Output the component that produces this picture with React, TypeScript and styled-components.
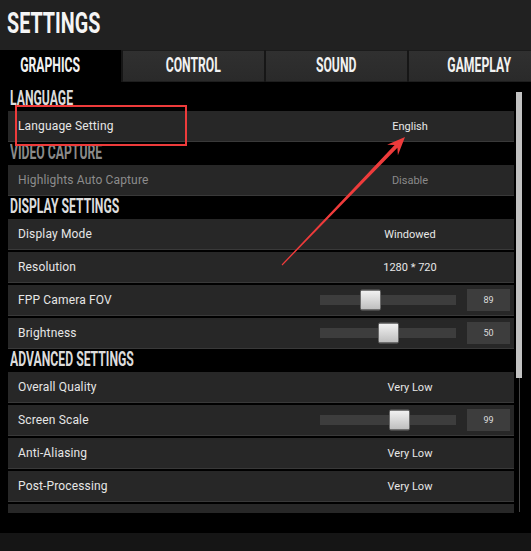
import styled, { createGlobalStyle } from "styled-components";

const GlobalStyle = createGlobalStyle`
  html, body {
    margin: 0;
    padding: 0;
    background: #000;
  }
  body {
    font-family: Roboto, "Liberation Sans", sans-serif;
  }
`;

const Screen = styled.div`
  position: relative;
  width: 531px;
  height: 551px;
  overflow: hidden;
  display: flex;
  flex-direction: column;
  background: #000;
`;

// game-style narrow caps, squeezed from Roboto bold
const Condensed = styled.span<{ $scale?: number; $origin?: string }>`
  display: inline-block;
  font-family: Roboto, "Liberation Sans", sans-serif;
  font-weight: 700;
  white-space: nowrap;
  transform: scaleX(${(p) => p.$scale ?? 0.61});
  transform-origin: ${(p) => p.$origin ?? "left"} center;
`;

const TitleBar = styled.header`
  height: 50px;
  flex-shrink: 0;
  box-sizing: border-box;
  padding: 9px 0 0 7px;
  background: #212121;
`;

const Title = styled(Condensed)`
  font-size: 29px;
  line-height: 29px;
  color: #f5f5f5;
`;

const TabBar = styled.nav`
  height: 32px;
  flex-shrink: 0;
  display: flex;
  gap: 2px;
  margin-left: -20px;
  background: #161616;
`;

const Tab = styled.div<{ $active?: boolean }>`
  width: 141px;
  flex-shrink: 0;
  box-sizing: border-box;
  display: flex;
  align-items: center;
  justify-content: center;
  padding-bottom: 2px;
  background: ${(p) =>
    p.$active ? "#000" : "linear-gradient(#303030, #2a2a2a)"};
  border-top: 1px solid ${(p) => (p.$active ? "#000" : "#1b1b1b")};
  border-bottom: 1px solid ${(p) => (p.$active ? "#000" : "#1e1e1e")};
`;

const TabLabel = styled(Condensed)`
  font-size: 20px;
  line-height: 20px;
  color: #f2f2f2;
`;

const Body = styled.main`
  flex: 1;
  min-height: 0;
  display: flex;
  padding: 0 0 20px 8px;
`;

const List = styled.div`
  width: 506px;
  flex-shrink: 0;
  box-sizing: border-box;
  padding-top: 8px;
  overflow: hidden;
  display: flex;
  flex-direction: column;
`;

const Scroll = styled.div`
  width: 6px;
  margin: 10px 0 1px 2px;
  display: flex;
  flex-direction: column;
  align-items: center;
`;

const Thumb = styled.div`
  width: 6px;
  height: 286px;
  background: #c2c2c2;
`;

const Rail = styled.div`
  flex: 1;
  width: 1px;
  background: #464646;
`;

const SectionTitle = styled.div<{ $dim?: boolean }>`
  height: 21px;
  flex-shrink: 0;
  padding-left: 2px;
  line-height: 17px;
  color: ${(p) => (p.$dim ? "#8a8a8a" : "#dcdcdc")};
`;

const SectionText = styled(Condensed)`
  font-size: 20px;
`;

const Row = styled.div`
  flex-shrink: 0;
  height: 30px;
  margin-bottom: 2px;
  display: grid;
  grid-template-columns: 312px 1fr;
  align-items: center;
  background: #272727;
  border-bottom: 1px solid #393939;
`;

const Label = styled.span<{ $dim?: boolean }>`
  padding-left: 10px;
  font-size: 12px;
  letter-spacing: 0.15px;
  color: ${(p) => (p.$dim ? "#8c8c8c" : "#e6e6e6")};
`;

const Value = styled.span<{ $dim?: boolean }>`
  width: 180px;
  text-align: center;
  font-size: 11px;
  color: ${(p) => (p.$dim ? "#8a8a8a" : "#e8e8e8")};
`;

const Slider = styled.div`
  display: flex;
  align-items: center;
  gap: 11px;
`;

const Track = styled.div`
  position: relative;
  width: 136px;
  height: 10px;
  background: #3d3d3d;
`;

const Knob = styled.div`
  position: absolute;
  top: 50%;
  width: 21px;
  height: 21px;
  box-sizing: border-box;
  transform: translateY(-50%);
  border: 1px solid #6a6a6a;
  border-radius: 2px;
  background: linear-gradient(#f2f2f2, #bdbdbd);
`;

const NumBox = styled.div`
  width: 43px;
  height: 22px;
  display: flex;
  align-items: center;
  justify-content: center;
  background: #3d3d3d;
  font-size: 9px;
  color: #dedede;
`;

const BottomBar = styled.footer`
  height: 18px;
  flex-shrink: 0;
  background: #151515;
`;

const Markup = styled.svg`
  position: absolute;
  top: 0;
  left: 0;
  pointer-events: none;
`;

type Item =
  | { kind: "section"; title: string; dim?: boolean }
  | { kind: "value"; label: string; value: string; dim?: boolean }
  | { kind: "slider"; label: string; value: number; knob: number }
  | { kind: "more" };

const items: Item[] = [
  { kind: "section", title: "LANGUAGE" },
  { kind: "value", label: "Language Setting", value: "English" },
  { kind: "section", title: "VIDEO CAPTURE", dim: true },
  { kind: "value", label: "Highlights Auto Capture", value: "Disable", dim: true },
  { kind: "section", title: "DISPLAY SETTINGS" },
  { kind: "value", label: "Display Mode", value: "Windowed" },
  { kind: "value", label: "Resolution", value: "1280 * 720" },
  { kind: "slider", label: "FPP Camera FOV", value: 89, knob: 40 },
  { kind: "slider", label: "Brightness", value: 50, knob: 58 },
  { kind: "section", title: "ADVANCED SETTINGS" },
  { kind: "value", label: "Overall Quality", value: "Very Low" },
  { kind: "slider", label: "Screen Scale", value: 99, knob: 69 },
  { kind: "value", label: "Anti-Aliasing", value: "Very Low" },
  { kind: "value", label: "Post-Processing", value: "Very Low" },
  { kind: "more" },
];

const tabs = ["GRAPHICS", "CONTROL", "SOUND", "GAMEPLAY"];

export default function App() {
  return (
    <>
      <GlobalStyle />
      <Screen>
        <TitleBar>
          <Title $scale={0.68}>SETTINGS</Title>
        </TitleBar>
        <TabBar>
          {tabs.map((t, i) => (
            <Tab key={t} $active={i === 0}>
              <TabLabel $origin="center">{t}</TabLabel>
            </Tab>
          ))}
        </TabBar>
        <Body>
          <List>
            {items.map((item, i) => {
              if (item.kind === "section") {
                return (
                  <SectionTitle key={i} $dim={item.dim}>
                    <SectionText>{item.title}</SectionText>
                  </SectionTitle>
                );
              }
              if (item.kind === "more") {
                // next row, scrolled mostly out of view
                return <Row key={i} />;
              }
              if (item.kind === "slider") {
                return (
                  <Row key={i}>
                    <Label>{item.label}</Label>
                    <Slider>
                      <Track>
                        <Knob style={{ left: item.knob }} />
                      </Track>
                      <NumBox>{item.value}</NumBox>
                    </Slider>
                  </Row>
                );
              }
              return (
                <Row key={i}>
                  <Label $dim={item.dim}>{item.label}</Label>
                  <Value $dim={item.dim}>{item.value}</Value>
                </Row>
              );
            })}
          </List>
          <Scroll>
            <Thumb />
            <Rail />
          </Scroll>
        </Body>
        <BottomBar />
        <Markup width="531" height="551" viewBox="0 0 531 551">
          <rect
            x="16"
            y="106"
            width="170"
            height="39"
            fill="none"
            stroke="#ee3b3b"
            strokeWidth="2"
          />
          <polygon
            fill="#ee3b3b"
            points="405,137 397.9,155.2 397.4,147.8 282.4,265.4 281.6,264.6 394.6,145 387.1,144.8"
          />
        </Markup>
      </Screen>
    </>
  );
}
